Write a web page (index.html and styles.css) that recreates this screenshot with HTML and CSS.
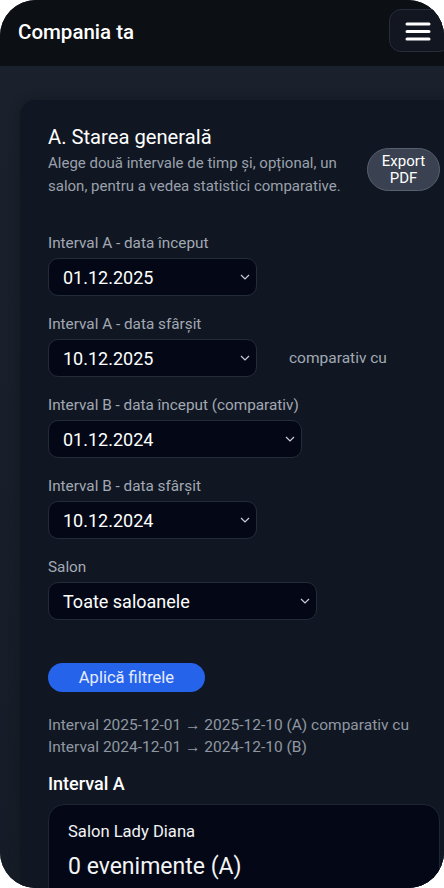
FILE: index.html
```html
<!DOCTYPE html>
<html lang="ro">
<head>
    <meta charset="UTF-8">
    <meta name="viewport" content="width=device-width, initial-scale=1.0">
    <title>Compania ta - Starea generală</title>
    <link rel="stylesheet" href="styles.css">
</head>
<body>
    <div class="phone">
        <header class="topbar">
            <h1>Compania ta</h1>
            <button class="menu-btn" aria-label="Meniu">
                <svg width="26" height="20" viewBox="0 0 26 20">
                    <path d="M2 3h22M2 10.5h22M2 18h22" stroke="#fff" stroke-width="3" stroke-linecap="round" fill="none"/>
                </svg>
            </button>
        </header>

        <main class="page">
            <section class="card">
                <div class="card-head">
                    <div class="card-intro">
                        <h2>A. Starea generală</h2>
                        <p class="muted">Alege două intervale de timp și, opțional, un salon, pentru a vedea statistici comparative.</p>
                    </div>
                    <button class="export-btn">Export<br>PDF</button>
                </div>

                <form class="filters">
                    <div class="field">
                        <label>Interval A - data început</label>
                        <div class="select w-sm">
                            <select><option>01.12.2025</option></select>
                            <svg class="chev" width="10" height="6" viewBox="0 0 10 6"><path d="M1 1l4 4 4-4" stroke="#c9ced6" stroke-width="1.2" fill="none"/></svg>
                        </div>
                    </div>

                    <div class="field">
                        <label>Interval A - data sfârșit</label>
                        <div class="field-row">
                            <div class="select w-sm">
                                <select><option>10.12.2025</option></select>
                                <svg class="chev" width="10" height="6" viewBox="0 0 10 6"><path d="M1 1l4 4 4-4" stroke="#c9ced6" stroke-width="1.2" fill="none"/></svg>
                            </div>
                            <span class="vs">comparativ cu</span>
                        </div>
                    </div>

                    <div class="field">
                        <label>Interval B - data început (comparativ)</label>
                        <div class="select w-md">
                            <select><option>01.12.2024</option></select>
                            <svg class="chev" width="10" height="6" viewBox="0 0 10 6"><path d="M1 1l4 4 4-4" stroke="#c9ced6" stroke-width="1.2" fill="none"/></svg>
                        </div>
                    </div>

                    <div class="field">
                        <label>Interval B - data sfârșit</label>
                        <div class="select w-sm">
                            <select><option>10.12.2024</option></select>
                            <svg class="chev" width="10" height="6" viewBox="0 0 10 6"><path d="M1 1l4 4 4-4" stroke="#c9ced6" stroke-width="1.2" fill="none"/></svg>
                        </div>
                    </div>

                    <div class="field">
                        <label>Salon</label>
                        <div class="select w-lg">
                            <select><option>Toate saloanele</option></select>
                            <svg class="chev" width="10" height="6" viewBox="0 0 10 6"><path d="M1 1l4 4 4-4" stroke="#c9ced6" stroke-width="1.2" fill="none"/></svg>
                        </div>
                    </div>

                    <button type="button" class="apply-btn">Aplică filtrele</button>
                </form>

                <p class="summary">Interval 2025-12-01 → 2025-12-10 (A) comparativ cu<br>Interval 2024-12-01 → 2024-12-10 (B)</p>

                <h3 class="section-title">Interval A</h3>
                <div class="stat-card">
                    <div class="stat-name">Salon Lady Diana</div>
                    <div class="stat-value">0 evenimente (A)</div>
                </div>
            </section>
        </main>
    </div>
</body>
</html>
```

FILE: styles.css
```css
:root {
    --header-bg: #0c0f14;
    --page-bg: #171d28;
    --card-bg: #111722;
    --field-bg: #040816;
    --field-border: #252c39;
    --muted: #9aa1ac;
    --label: #a2a9b4;
    --text: #f3f4f6;
    --blue: #2563eb;
}

* {
    margin: 0;
    padding: 0;
    box-sizing: border-box;
}

body {
    background: #fff;
    font-family: Roboto, "Liberation Sans", Arial, sans-serif;
    color: var(--text);
}

.phone {
    width: 444px;
    height: 888px;
    border-radius: 36px;
    overflow: hidden;
    background: var(--page-bg);
}

.topbar {
    height: 66px;
    background: var(--header-bg);
    display: flex;
    align-items: center;
    justify-content: space-between;
    padding-left: 18px;
}

.topbar h1 {
    font-size: 20.5px;
    font-weight: 500;
    color: #fff;
    margin-top: -3px;
}

.menu-btn {
    width: 62px;
    height: 43px;
    margin-right: -7px;
    margin-top: -5px;
    display: flex;
    align-items: center;
    padding-left: 15px;
    background: #111620;
    border: 1px solid #272e3b;
    border-radius: 12px;
}

.page {
    width: 488px;
    padding: 34px 20px 0;
    background: linear-gradient(180deg, #1a212c 0%, #161c27 100%);
    min-height: 822px;
}

.card {
    background: var(--card-bg);
    border-radius: 16px;
    padding: 24px 28px 28px;
    box-shadow: 0 0 12px rgba(0,0,0,0.25);
}

.card-head {
    display: flex;
    gap: 12px;
}

.card-intro {
    flex: 1;
}

.card-intro h2 {
    font-size: 20.2px;
    font-weight: 400;
    line-height: 26px;
    color: #fff;
}

.muted {
    color: var(--muted);
    font-size: 15px;
    line-height: 23px;
    margin-top: 2px;
}

.export-btn {
    flex: none;
    width: 73px;
    height: 43px;
    margin-top: 24px;
    border-radius: 22px;
    background: #3a4150;
    border: 1px solid #586070;
    color: #fff;
    font-family: inherit;
    font-size: 15px;
    line-height: 17px;
}

.filters {
    margin-top: 34px;
    display: flex;
    flex-direction: column;
    gap: 17px;
}

.field label {
    display: block;
    font-size: 15.3px;
    line-height: 22px;
    color: var(--label);
    margin-bottom: 4px;
}

.field-row {
    display: flex;
    align-items: center;
    gap: 32px;
}

.vs {
    font-size: 15.5px;
    color: var(--label);
}

.select {
    position: relative;
    height: 38px;
}

.w-sm { width: 209px; }
.w-md { width: 254px; }
.w-lg { width: 269px; }

.select select {
    appearance: none;
    -webkit-appearance: none;
    width: 100%;
    height: 100%;
    background: var(--field-bg);
    border: 1px solid var(--field-border);
    border-radius: 10px;
    color: #fff;
    font-family: inherit;
    font-size: 18px;
    padding-left: 14px;
}

.chev {
    position: absolute;
    right: 7px;
    top: 16px;
    pointer-events: none;
}

.apply-btn {
    align-self: flex-start;
    margin-top: 26px;
    width: 157px;
    height: 29px;
    border: none;
    border-radius: 15px;
    background: var(--blue);
    color: #e6ecff;
    font-family: inherit;
    font-size: 16.5px;
}

.summary {
    margin-top: 22px;
    font-size: 15.5px;
    line-height: 22px;
    color: #8f97a3;
}

.section-title {
    margin-top: 14px;
    font-size: 18px;
    font-weight: 500;
    line-height: 24px;
    color: #fff;
}

.stat-card {
    margin-top: 8px;
    background: var(--field-bg);
    border: 1px solid #1f2633;
    border-radius: 16px;
    padding: 17px 19px 20px;
}

.stat-name {
    font-size: 16.6px;
    line-height: 20px;
}

.stat-value {
    margin-top: 10px;
    font-size: 23px;
    line-height: 30px;
}
```
